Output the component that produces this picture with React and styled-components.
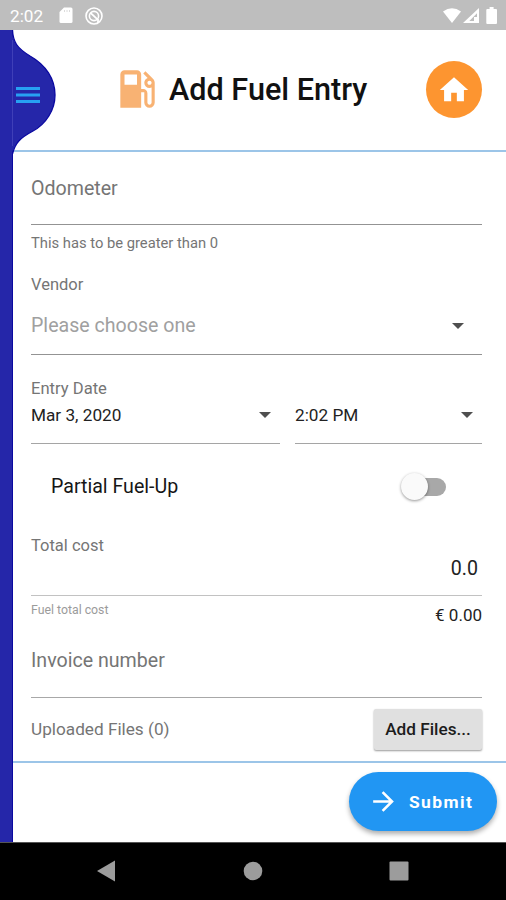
import React from "react";
import styled, { createGlobalStyle } from "styled-components";
import { MdArrowForward, MdHome, MdLocalGasStation } from "react-icons/md";

const GlobalStyle = createGlobalStyle`
  * {
    box-sizing: border-box;
  }
  body {
    margin: 0;
    background: #fff;
    font-family: Roboto, "Noto Sans", sans-serif;
    color: #1c1c1c;
  }
`;

const Screen = styled.div`
  width: 506px;
  height: 900px;
  display: flex;
  flex-direction: column;
  overflow: hidden;
`;

const StatusBar = styled.header`
  height: 30px;
  display: flex;
  align-items: center;
  padding: 1px 9px 0 10px;
  background: #bebebe;
  color: #fff;
  font-size: 17.2px;
  svg {
    display: block;
  }
`;

const StatusIcons = styled.div`
  display: flex;
  align-items: center;
  gap: ${({ gap }) => gap}px;
  margin-left: ${({ push }) => push};
`;

const Body = styled.div`
  height: 812px;
  display: flex;
`;

const Rail = styled.aside`
  position: relative;
  width: 13px;
  flex: none;
  background: #2526a9;
  border-right: 1px solid #0a08a0;
`;

const DrawerHandle = styled.button`
  position: absolute;
  top: 0;
  left: 12px;
  width: 46px;
  height: 124px;
  padding: 0;
  border: 0;
  background: none;
  svg {
    display: block;
  }
`;

const Content = styled.main`
  flex: 1;
  display: flex;
  flex-direction: column;
`;

const TitleBar = styled.div`
  height: 122px;
  display: flex;
  align-items: center;
  padding: 0 24px 2px 99px;
  border-bottom: 2px solid #9cc5e8;
  h1 {
    margin: 1px 0 0 7px;
    font-size: 30.6px;
    font-weight: 500;
    line-height: 36px;
    white-space: nowrap;
    color: #111;
  }
`;

const FuelIcon = styled(MdLocalGasStation)`
  flex: none;
  color: #f8b273;
`;

const HomeButton = styled.button`
  width: 56px;
  height: 57px;
  flex: none;
  display: flex;
  align-items: center;
  justify-content: center;
  margin-left: auto;
  padding: 1px 0 0;
  border: 0;
  border-radius: 50%;
  background: #fd9530;
  color: #fff;
`;

const Form = styled.section`
  height: 609px;
  padding: 0 24px 0 18px;
`;

const Row = styled.div`
  height: ${({ height }) => height}px;
  display: flex;
  align-items: center;
  justify-content: space-between;
  padding: ${({ inset }) => inset || "0"};
  border-bottom: ${({ line }) => (line ? `1px solid ${line}` : "0")};
  white-space: nowrap;
`;

const Text = styled.span`
  font-size: ${({ size }) => size}px;
  line-height: 24px;
  color: ${({ tone }) => tone || "#757575"};
`;

const FuelNote = styled(Text)`
  padding-bottom: 10px;
`;

const DateTime = styled.div`
  display: grid;
  grid-template-columns: 249px 187px;
  column-gap: 15px;
`;

const Caret = styled.i`
  width: 0;
  height: 0;
  border: 6px solid transparent;
  border-top-color: #4f4f4f;
  border-bottom: 0;
`;

const Switch = styled.div`
  width: 45px;
  height: 28px;
  display: flex;
  align-items: center;
  &:before {
    content: "";
    width: 27px;
    height: 27px;
    flex: none;
    border-radius: 50%;
    background: #fafafa;
    box-shadow: 0 1px 3px rgba(0, 0, 0, 0.42);
    z-index: 1;
  }
  &:after {
    content: "";
    width: 38px;
    height: 18px;
    flex: none;
    margin-left: -20px;
    border-radius: 9px;
    background: #a8a8a8;
  }
`;

const FilesButton = styled.button`
  width: 108px;
  height: 41px;
  padding: 0;
  border: 0;
  border-radius: 2px;
  background: #e0e0e0;
  box-shadow: 0 1px 2px rgba(0, 0, 0, 0.4);
  font-family: inherit;
  font-size: 17.2px;
  font-weight: 500;
  color: #1c1c1c;
`;

const Footer = styled.footer`
  height: 81px;
  display: flex;
  justify-content: flex-end;
  padding: 9px 9px 0 0;
  border-top: 2px solid #9cc5e8;
`;

const SubmitButton = styled.button`
  width: 148px;
  height: 59px;
  display: flex;
  align-items: center;
  gap: 10px;
  padding: 0 0 0 19px;
  border: 0;
  border-radius: 30px;
  background: #2196f3;
  box-shadow: 0 3px 5px rgba(0, 0, 0, 0.32);
  font-family: inherit;
  font-size: 17.4px;
  font-weight: 700;
  letter-spacing: 1.4px;
  color: #fff;
`;

const NavBar = styled.nav`
  height: 58px;
  display: flex;
  align-items: center;
  justify-content: space-between;
  padding: 0 97px 2px 96px;
  background: #000;
  border-top: 1px solid #555;
`;

function NavIcon({ children }) {
  return (
    <svg width="20" height="22" viewBox="0 0 20 22" fill="#9c9c9c">
      {children}
    </svg>
  );
}

export default function App() {
  return (
    <Screen>
      <GlobalStyle />
      <StatusBar>
        <span>2:02</span>
        <StatusIcons gap={11} push="16px">
          <svg width="14" height="17" viewBox="0 0 14 17">
            <path
              d="M5 .500h7q1.500 0 1.500 1.500v12.500q0 1.500-1.500 1.500H2q-1.500 0-1.500-1.500V5z"
              fill="#fff"
            />
            <path d="M5.500 3v2M8 3v2M10.500 3v2" stroke="#dcdcdc" />
          </svg>
          <svg width="20" height="20" viewBox="0 0 20 20" fill="none">
            <circle cx="10" cy="10" r="8" stroke="#fff" strokeWidth="1.6" />
            <circle cx="10" cy="10" r="4.6" stroke="#fff" strokeWidth="1.6" />
            <path d="M6.5 6.8l7 6.6M14 13v4" stroke="#fff" strokeWidth="1.8" />
          </svg>
        </StatusIcons>
        <StatusIcons gap={0} push="auto">
          <svg width="54" height="20" viewBox="0 0 54 20" fill="#fff">
            <path d="M0 5.5Q9 -1 18 5.5L9 17z" />
            <path
              fillRule="evenodd"
              d="M36 2v15H20zM34 7.2l-7.7 7.9H31v-4h3z"
            />
            <path d="M46.6 1h4v2H53q1 0 1 1v13q0 1-1 1h-8.700q-1 0-1-1V4q0-1 1-1h2.300z" />
          </svg>
        </StatusIcons>
      </StatusBar>
      <Body>
        <Rail>
          <DrawerHandle aria-label="Open menu">
            <svg width="46" height="124" viewBox="0 0 46 124">
              <path
                d="M0 0C1 12 5 18 18 26C34 35 43 49 43 65C43 80 34 94 21 101C8 108 3 113 0 124z"
                fill="#2526a9"
              />
              <path
                d="M.5 0C1 12 5 18 18 26C34 35 43 49 43 65C43 80 34 94 21 101C8 108 3 113 .5 124"
                fill="none"
                stroke="#0a08a0"
                strokeWidth="1.3"
              />
              <path d="M.5 10v106" stroke="#3f3fb8" />
              <path
                d="M4 58.500h24M4 65h24M4 71.500h24"
                stroke="#27a0f3"
                strokeWidth="3"
              />
            </svg>
          </DrawerHandle>
        </Rail>
        <Content>
          <TitleBar>
            <FuelIcon size={50} />
            <h1>Add Fuel Entry</h1>
            <HomeButton aria-label="Home">
              <MdHome size={34} />
            </HomeButton>
          </TitleBar>
          <Form>
            <Row height={73} line="#939393" inset="1px 0 0">
              <Text size={19.6}>Odometer</Text>
            </Row>
            <Row height={37} inset="0 0 2px">
              <Text size={14.75}>This has to be greater than 0</Text>
            </Row>
            <Row height={44} inset="2px 0 0">
              <Text size={16.5}>Vendor</Text>
            </Row>
            <Row height={49} line="#939393" inset="0 18px 8px 0">
              <Text size={19.6} tone="#a0a0a0">
                Please choose one
              </Text>
              <Caret />
            </Row>
            <Row height={46} inset="21px 0 0">
              <Text size={16.6}>Entry Date</Text>
            </Row>
            <DateTime>
              <Row height={43} line="#a5a5a5" inset="0 9px 15px 0">
                <Text size={17.2} tone="#222">
                  Mar 3, 2020
                </Text>
                <Caret />
              </Row>
              <Row height={43} line="#a5a5a5" inset="0 9px 15px 0">
                <Text size={17.2} tone="#222">
                  2:02 PM
                </Text>
                <Caret />
              </Row>
            </DateTime>
            <Row height={84} inset="1px 36px 0 20px">
              <Text size={19.6} tone="#161616">
                Partial Fuel-Up
              </Text>
              <Switch />
            </Row>
            <Row height={30} inset="5px 0 0">
              <Text size={16.5}>Total cost</Text>
            </Row>
            <Row height={38} line="#c2c2c2" inset="0 4px 16px 0">
              <span />
              <Text size={19.6} tone="#222">
                0.0
              </Text>
            </Row>
            <Row height={38}>
              <FuelNote size={12.3} tone="#9b9b9b">
                Fuel total cost
              </FuelNote>
              <Text size={17} tone="#222">
                € 0.00
              </Text>
            </Row>
            <Row height={64} line="#a8a8a8" inset="0 0 10px">
              <Text size={19.6}>Invoice number</Text>
            </Row>
            <Row height={63} inset="0 0 1px">
              <Text size={17.2}>Uploaded Files (0)</Text>
              <FilesButton>Add Files...</FilesButton>
            </Row>
          </Form>
          <Footer>
            <SubmitButton>
              <MdArrowForward size={31} />
              Submit
            </SubmitButton>
          </Footer>
        </Content>
      </Body>
      <NavBar>
        <NavIcon>
          <path d="M1 11L19 .500v21z" />
        </NavIcon>
        <NavIcon>
          <circle cx="10" cy="11" r="9.300" />
        </NavIcon>
        <NavIcon>
          <rect x="0.500" y="1.500" width="19" height="19" rx="1" />
        </NavIcon>
      </NavBar>
    </Screen>
  );
}
